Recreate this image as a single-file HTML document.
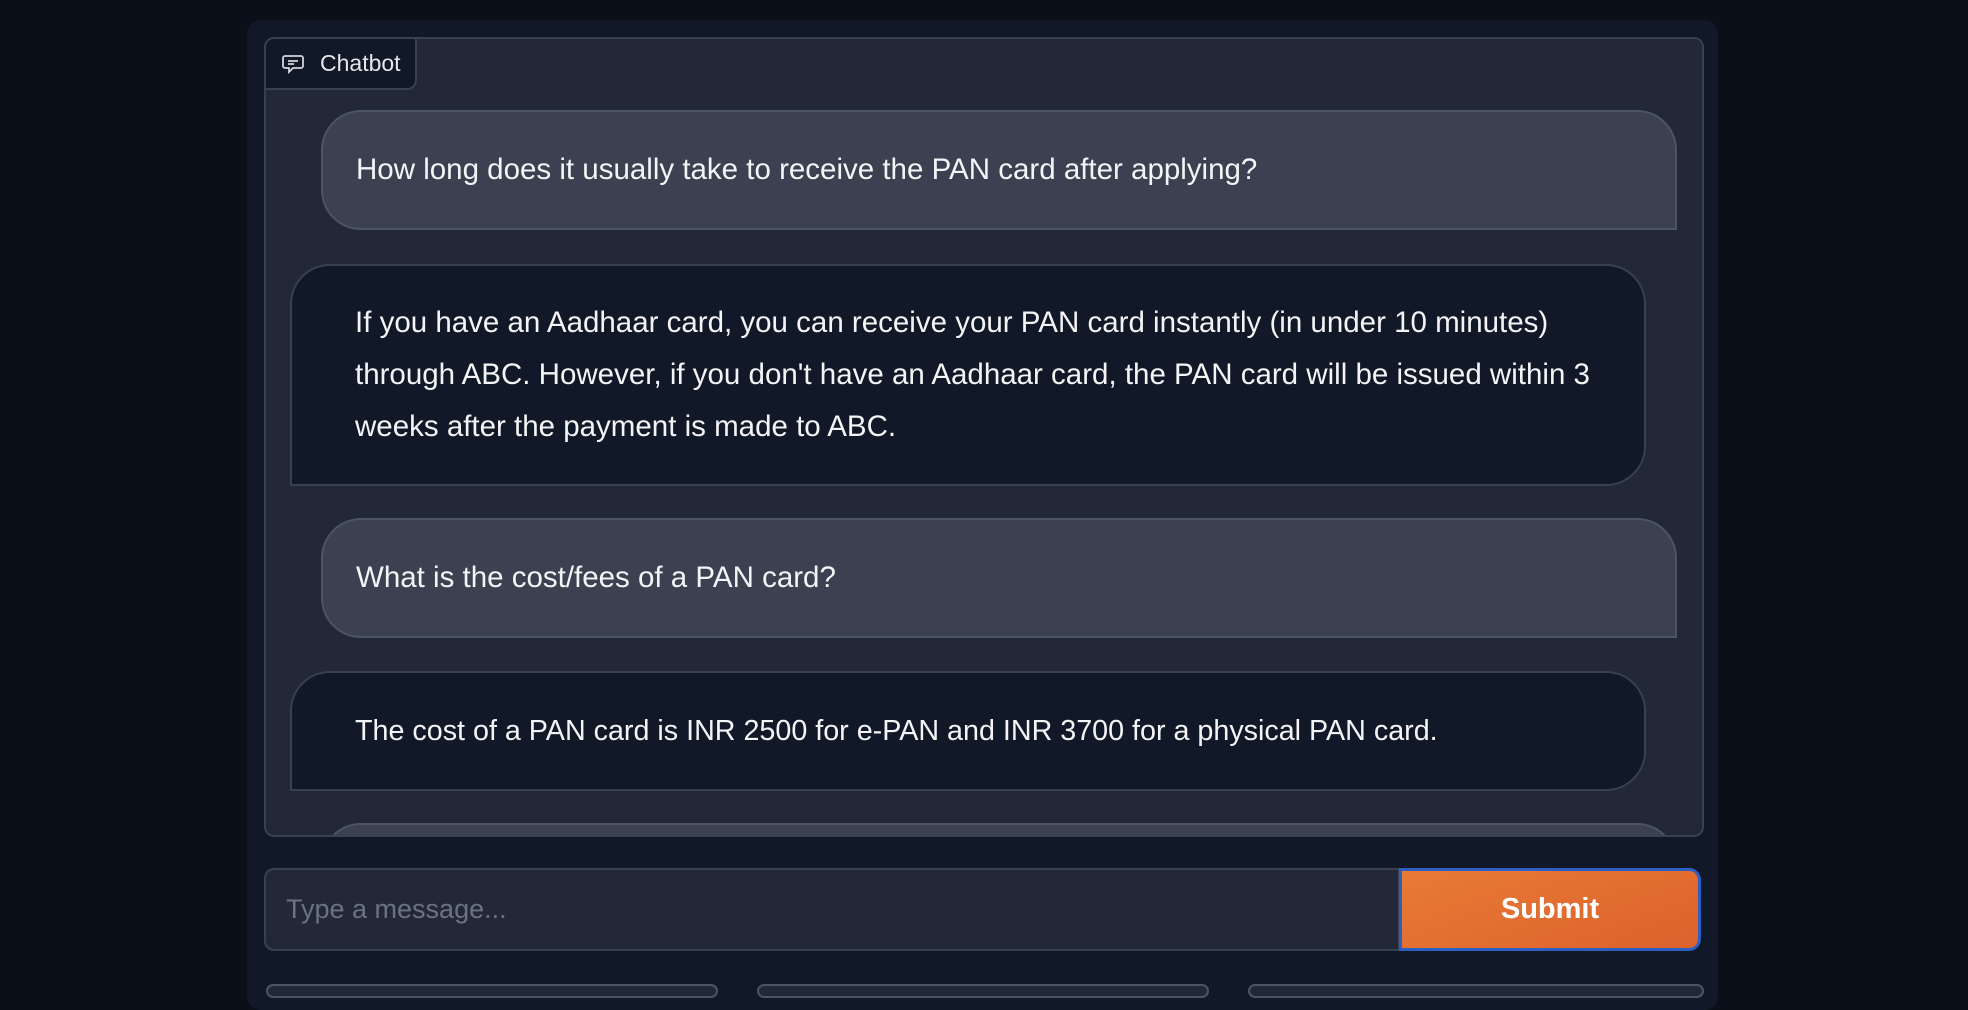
<!DOCTYPE html>
<html><head><style>
html,body{margin:0;padding:0;width:1968px;height:986px;overflow:hidden;background:#0b0f19;font-family:"Liberation Sans",sans-serif;}
.panel{position:absolute;left:247px;top:20px;width:1471px;height:990px;background:#111827;border-radius:14px;}
.box{position:absolute;left:264px;top:37px;width:1436px;height:796px;background:#222836;border:2px solid #374151;border-radius:10px;overflow:hidden;}
.tab{position:absolute;left:-2px;top:-2px;width:153px;height:53px;background:#111827;border:2px solid #374151;border-radius:10px 0 10px 0;color:#e5e7eb;font-size:23px;display:flex;align-items:center;box-sizing:border-box;padding-left:16px;}
.tab svg{margin-right:16px}
.msg{position:absolute;box-sizing:border-box;color:#f3f4f6;font-size:29.5px;line-height:52px;padding:0 20px 0 33px;border:2px solid #4b5563;display:flex;align-items:center;white-space:nowrap;}
.u{left:55px;width:1356px;background:#3b4150;border-radius:40px 40px 0 40px;}
.b{left:24px;width:1356px;background:#111827;border-radius:40px 40px 40px 0;border-color:#374151;padding-left:63px;}
.input{position:absolute;left:264px;top:868px;width:1136px;height:83px;box-sizing:border-box;background:#222836;border:2px solid #374151;border-radius:10px 0 0 10px;color:#6b7280;font-size:27px;padding-left:20px;display:flex;align-items:center;}
.btn{position:absolute;left:1399px;top:868px;width:302px;height:83px;box-sizing:border-box;background:linear-gradient(160deg,#e97a35,#dc622c);border:3px solid #2c5fc4;border-radius:0 12px 12px 0;color:#fff;font-weight:bold;font-size:29px;display:flex;align-items:center;justify-content:center;}
.bot{position:absolute;top:984px;height:10px;background:#1f2937;border:2px solid #4b5563;border-radius:10px;}
</style></head><body>
<div class="panel"></div>
<div class="box">
 <div class="tab"><svg width="22" height="20" viewBox="0 0 22 20" fill="none" stroke="#d1d5db" stroke-width="1.8"><path d="M3 2h16a2 2 0 0 1 2 2v8a2 2 0 0 1-2 2H11l-4 4v-4H3a2 2 0 0 1-2-2V4a2 2 0 0 1 2-2z"/><path d="M6 7h10M6 10h6"/></svg>Chatbot</div>
 <div class="msg u" style="top:71px;height:120px;">How long does it usually take to receive the PAN card after applying?</div>
 <div class="msg b" style="top:225px;height:222px;">If you have an Aadhaar card, you can receive your PAN card instantly (in under 10 minutes)<br>through ABC. However, if you don't have an Aadhaar card, the PAN card will be issued within 3<br>weeks after the payment is made to ABC.</div>
 <div class="msg u" style="top:479px;height:120px;">What is the cost/fees of a PAN card?</div>
 <div class="msg b" style="top:632px;height:120px;font-size:28.7px;">The cost of a PAN card is INR 2500 for e-PAN and INR 3700 for a physical PAN card.</div>
 <div class="msg u" style="top:784px;height:120px;"></div>
</div>
<div class="input">Type a message...</div>
<div class="btn">Submit</div>
<div class="bot" style="left:266px;width:448px"></div>
<div class="bot" style="left:757px;width:448px"></div>
<div class="bot" style="left:1248px;width:452px"></div>
</body></html>
